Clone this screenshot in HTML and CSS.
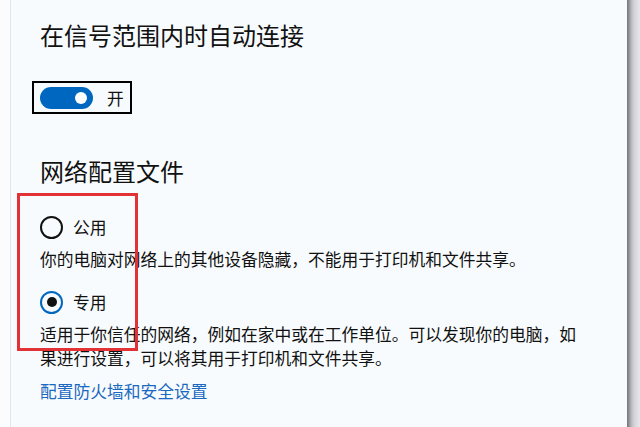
FILE: index.html
```html
<!DOCTYPE html>
<html lang="zh-CN">
<head>
<meta charset="UTF-8">
<meta name="viewport" content="width=device-width, initial-scale=1.0">
<title>网络设置</title>
<link rel="stylesheet" href="styles.css">
</head>
<body>
<div class="window">
  <div class="side"></div>
  <div class="content">
    <h1 class="title">在信号范围内时自动连接</h1>
    <div class="toggle-focus">
      <span class="toggle"><span class="knob"></span></span>
      <span class="toggle-label">开</span>
    </div>

    <h2 class="title title-sub">网络配置文件</h2>
    <div class="profiles">
      <label class="radio-row">
        <span class="radio"></span>
        <span>公用</span>
      </label>
      <p class="desc">你的电脑对网络上的其他设备隐藏，不能用于打印机和文件共享。</p>
      <label class="radio-row radio-row-2">
        <span class="radio checked"></span>
        <span>专用</span>
      </label>
      <p class="desc">适用于你信任的网络，例如在家中或在工作单位。可以发现你的电脑，如果进行设置，可以将其用于打印机和文件共享。</p>
      <div class="mark"></div>
    </div>
    <a class="link" href="#">配置防火墙和安全设置</a>
  </div>
  <div class="edge"></div>
</div>
</body>
</html>
```

FILE: styles.css
```css
*{
  margin: 0;
  padding: 0;
  box-sizing: border-box;
}
html, body{
  height: 100%;
}
body{
  background-color: #f8fbfd;
  color: #111;
  font-family: "Noto Sans CJK SC", "Noto Sans", sans-serif;
  font-size: 16.75px;
  overflow: hidden;
}
.window{
  display: flex;
  height: 427px;
}
.side{
  width: 11px;
  flex: none;
  background-color: #fbfcfd;
  border-right: 1px solid #e3e6ea;
}
.content{
  flex: 1;
  padding: 19px 0 0 29px;
}
.edge{
  width: 13px;
  flex: none;
  background: linear-gradient(to right, #76767c 0, #8e8e94 2px, #b4b4ba 4px, #d2d2d7 7px, #e8e8ec 100%);
}
.title{
  font-size: 24px;
  font-weight: 400;
  line-height: 32px;
}
.title-sub{
  margin-top: 41px;
}
.toggle-focus{
  display: inline-flex;
  align-items: center;
  margin: 30px 0 0 -8px;
  height: 33px;
  padding: 0 6px 0 6px;
  border: 2px solid #000;
}
.toggle{
  position: relative;
  width: 53px;
  height: 22px;
  border-radius: 11px;
  background-color: #0067c0;
}
.knob{
  position: absolute;
  top: 5px;
  right: 6px;
  width: 12px;
  height: 12px;
  border-radius: 50%;
  background-color: #fff;
}
.toggle-label{
  margin-left: 14px;
  line-height: 24px;
}
.profiles{
  position: relative;
  width: 550px;
  padding-top: 28px;
}
.radio-row{
  display: flex;
  align-items: center;
  gap: 10px;
  height: 24px;
}
.radio-row-2{
  margin-top: 19px;
}
.radio{
  width: 23px;
  height: 23px;
  border: 2px solid #111;
  border-radius: 50%;
  display: flex;
  align-items: center;
  justify-content: center;
}
.radio.checked{
  border-color: #0067c0;
}
.radio.checked::after{
  content: "";
  width: 10px;
  height: 10px;
  border-radius: 50%;
  background-color: #111;
}
.desc{
  margin-top: 8px;
  line-height: 24px;
}
.mark{
  position: absolute;
  left: -23px;
  top: 6px;
  width: 121px;
  height: 158px;
  border: 3px solid #e23236;
}
.link{
  display: inline-block;
  margin-top: 9px;
  line-height: 24px;
  color: #1a68c0;
  text-decoration: none;
}
```
